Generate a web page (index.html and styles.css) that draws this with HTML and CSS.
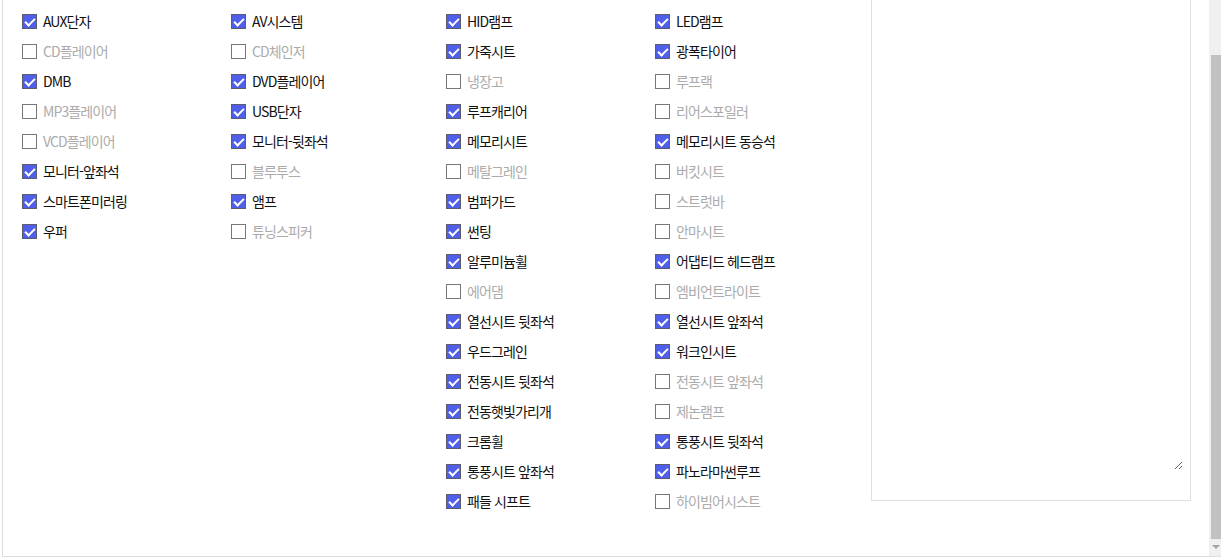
FILE: index.html
```html
<!DOCTYPE html>
<html lang="ko">
<head>
<meta charset="utf-8">
<title>옵션 선택</title>
<link rel="stylesheet" href="styles.css">
</head>
<body>
<div class="frame">
  <div class="viewport">
    <div class="content">
      <div class="groups">
        <div class="group group-a">
          <label class="opt"><input type="checkbox" checked><span>AUX단자</span></label>
          <label class="opt"><input type="checkbox" checked><span>AV시스템</span></label>
          <label class="opt"><input type="checkbox"><span>CD플레이어</span></label>
          <label class="opt"><input type="checkbox"><span>CD체인저</span></label>
          <label class="opt"><input type="checkbox" checked><span>DMB</span></label>
          <label class="opt"><input type="checkbox" checked><span>DVD플레이어</span></label>
          <label class="opt"><input type="checkbox"><span>MP3플레이어</span></label>
          <label class="opt"><input type="checkbox" checked><span>USB단자</span></label>
          <label class="opt"><input type="checkbox"><span>VCD플레이어</span></label>
          <label class="opt"><input type="checkbox" checked><span>모니터-뒷좌석</span></label>
          <label class="opt"><input type="checkbox" checked><span>모니터-앞좌석</span></label>
          <label class="opt"><input type="checkbox"><span>블루투스</span></label>
          <label class="opt"><input type="checkbox" checked><span>스마트폰미러링</span></label>
          <label class="opt"><input type="checkbox" checked><span>앰프</span></label>
          <label class="opt"><input type="checkbox" checked><span>우퍼</span></label>
          <label class="opt"><input type="checkbox"><span>튜닝스피커</span></label>
        </div>
        <div class="group group-b">
          <label class="opt"><input type="checkbox" checked><span>HID램프</span></label>
          <label class="opt"><input type="checkbox" checked><span>LED램프</span></label>
          <label class="opt"><input type="checkbox" checked><span>가죽시트</span></label>
          <label class="opt"><input type="checkbox" checked><span>광폭타이어</span></label>
          <label class="opt"><input type="checkbox"><span>냉장고</span></label>
          <label class="opt"><input type="checkbox"><span>루프랙</span></label>
          <label class="opt"><input type="checkbox" checked><span>루프캐리어</span></label>
          <label class="opt"><input type="checkbox"><span>리어스포일러</span></label>
          <label class="opt"><input type="checkbox" checked><span>메모리시트</span></label>
          <label class="opt"><input type="checkbox" checked><span>메모리시트 동승석</span></label>
          <label class="opt"><input type="checkbox"><span>메탈그레인</span></label>
          <label class="opt"><input type="checkbox"><span>버킷시트</span></label>
          <label class="opt"><input type="checkbox" checked><span>범퍼가드</span></label>
          <label class="opt"><input type="checkbox"><span>스트럿바</span></label>
          <label class="opt"><input type="checkbox" checked><span>썬팅</span></label>
          <label class="opt"><input type="checkbox"><span>안마시트</span></label>
          <label class="opt"><input type="checkbox" checked><span>알루미늄휠</span></label>
          <label class="opt"><input type="checkbox" checked><span>어댑티드 헤드램프</span></label>
          <label class="opt"><input type="checkbox"><span>에어댐</span></label>
          <label class="opt"><input type="checkbox"><span>엠비언트라이트</span></label>
          <label class="opt"><input type="checkbox" checked><span>열선시트 뒷좌석</span></label>
          <label class="opt"><input type="checkbox" checked><span>열선시트 앞좌석</span></label>
          <label class="opt"><input type="checkbox" checked><span>우드그레인</span></label>
          <label class="opt"><input type="checkbox" checked><span>워크인시트</span></label>
          <label class="opt"><input type="checkbox" checked><span>전동시트 뒷좌석</span></label>
          <label class="opt"><input type="checkbox"><span>전동시트 앞좌석</span></label>
          <label class="opt"><input type="checkbox" checked><span>전동햇빛가리개</span></label>
          <label class="opt"><input type="checkbox"><span>제논램프</span></label>
          <label class="opt"><input type="checkbox" checked><span>크롬휠</span></label>
          <label class="opt"><input type="checkbox" checked><span>통풍시트 뒷좌석</span></label>
          <label class="opt"><input type="checkbox" checked><span>통풍시트 앞좌석</span></label>
          <label class="opt"><input type="checkbox" checked><span>파노라마썬루프</span></label>
          <label class="opt"><input type="checkbox" checked><span>패들 시프트</span></label>
          <label class="opt"><input type="checkbox"><span>하이빔어시스트</span></label>
        </div>
      </div>
      <div class="memo"><textarea class="memo-input"></textarea></div>
    </div>
  </div>
  <div class="scrollbar">
    <div class="scroll-track"></div>
    <div class="scroll-thumb"></div>
    <div class="scroll-down"><div class="scroll-arrow"></div></div>
  </div>
</div>
</body>
</html>
```

FILE: styles.css
```css
html, body {
  margin: 0;
  padding: 0;
  background: #fff;
}

body {
  font-family: "Noto Sans CJK KR", "Noto Sans", sans-serif;
  overflow: hidden;
}

.frame {
  margin-left: 2px;
  height: 556px;
  display: flex;
  border-left: 1px solid #dedede;
  border-bottom: 1px solid #dedede;
}

.viewport {
  flex: 1;
  display: flex;
  flex-direction: column;
  justify-content: flex-end;
  overflow: hidden;
}

.content {
  display: flex;
  align-items: flex-end;
  padding: 0 0 40px 19px;
  flex-shrink: 0;
}

.groups {
  display: flex;
  align-items: flex-start;
}

.group {
  display: grid;
  grid-template-columns: 209px 1fr;
  grid-auto-rows: 30px;
}

.group-a { width: 424px; }
.group-b { width: 425px; }

.opt {
  display: flex;
  align-items: center;
  gap: 6px;
  font-size: 14px;
  letter-spacing: -0.9px;
  color: #ababab;
  white-space: nowrap;
}

.opt span {
  line-height: 1;
  padding-bottom: 1px;
}

.opt input {
  appearance: none;
  -webkit-appearance: none;
  position: relative;
  width: 15px;
  height: 15px;
  margin: 0;
  flex-shrink: 0;
  border: 1px solid #777;
  background: #fff;
  box-sizing: border-box;
}

.opt input:checked {
  background: #4f5fe9;
  border-color: #5c5c70;
}

.opt input:checked::after {
  content: "";
  position: absolute;
  left: 4px;
  top: 1px;
  width: 4px;
  height: 8px;
  border-right: 2px solid #fff;
  border-bottom: 2px solid #fff;
  transform: rotate(45deg);
}

.opt input:checked + span {
  color: #111;
}

.memo {
  width: 320px;
  height: 560px;
  margin-bottom: 15px;
  box-sizing: border-box;
  border: 1px solid #e0e0e0;
  padding: 0 7px 30px 7px;
  flex-shrink: 0;
}

.memo-input {
  display: block;
  width: 100%;
  height: 100%;
  margin: 0;
  padding: 0;
  border: none;
  outline: none;
  resize: vertical;
  background: #fff;
  box-sizing: border-box;
}

.scrollbar {
  width: 12px;
  flex-shrink: 0;
  display: flex;
  flex-direction: column;
  background: #f0f0f0;
}

.scroll-track {
  height: 55px;
}

.scroll-thumb {
  height: 484px;
  margin-left: 2px;
  background: #c1c1c1;
}

.scroll-down {
  flex: 1;
  display: flex;
  justify-content: center;
  padding-top: 6px;
  padding-left: 1px;
}

.scroll-arrow {
  width: 0;
  height: 0;
  border-left: 4px solid transparent;
  border-right: 4px solid transparent;
  border-top: 4px solid #a3a3a3;
}
```
